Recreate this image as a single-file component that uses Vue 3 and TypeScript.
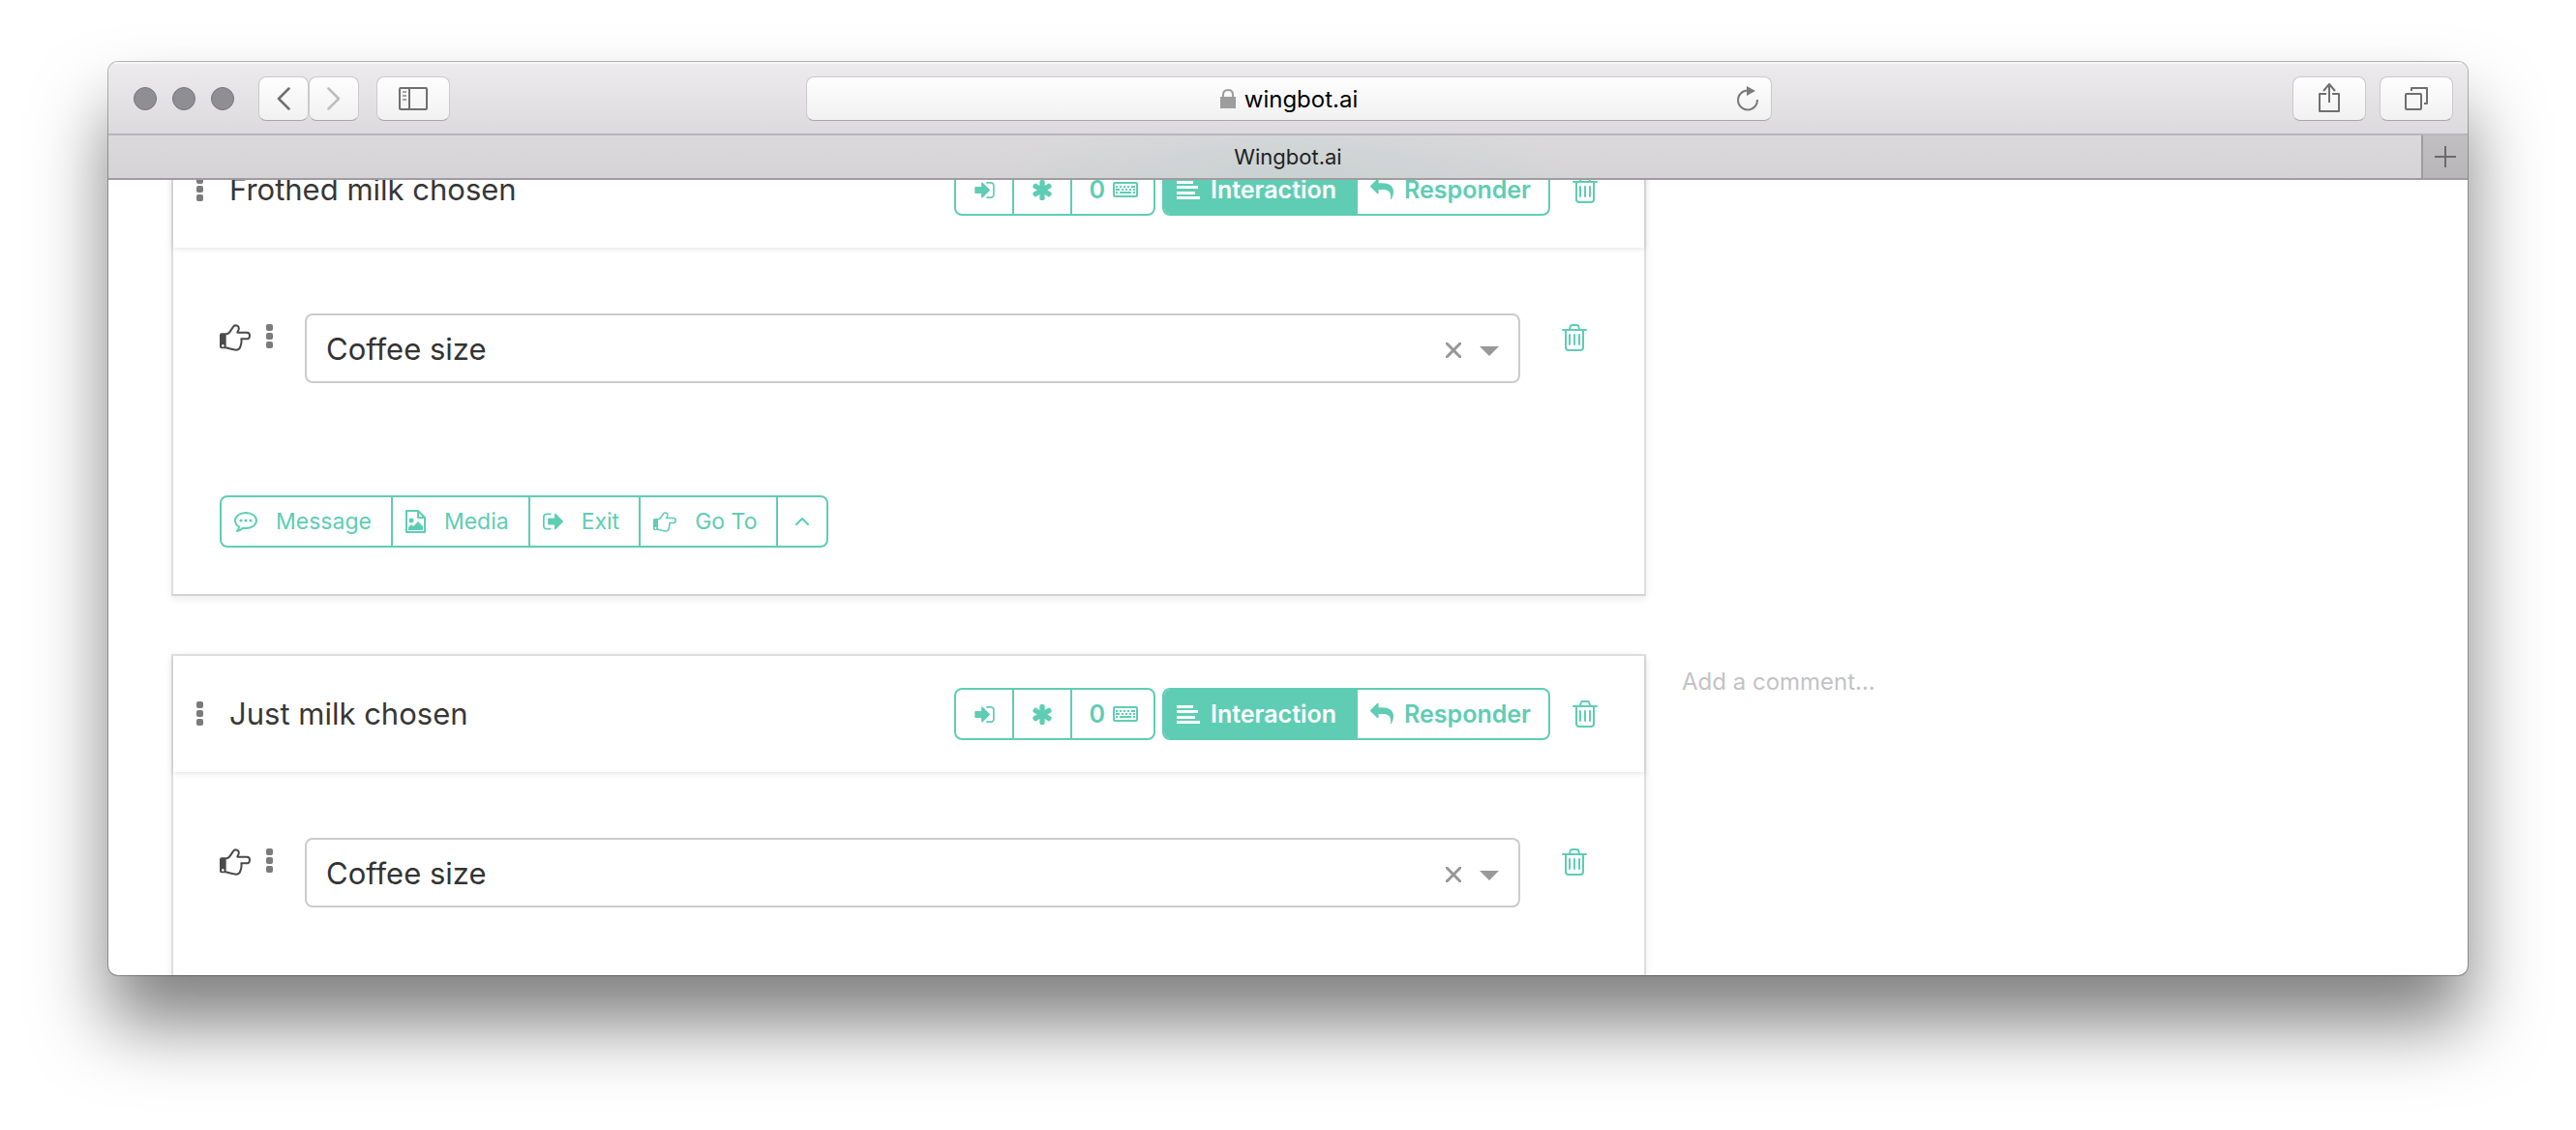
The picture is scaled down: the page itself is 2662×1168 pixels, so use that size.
<script setup lang="ts">
import { ref } from 'vue'

interface Block {
  id: number
  title: string
  target: string
  phrases: number
  comment: string
}

const address = ref('wingbot.ai')
const blocks = ref<Block[]>([
  { id: 1, title: 'Frothed milk chosen', target: 'Coffee size', phrases: 0, comment: '' },
  { id: 2, title: 'Just milk chosen', target: 'Coffee size', phrases: 0, comment: '' },
])
const inserts = [
  { label: 'Message', icon: 'comment' },
  { label: 'Media', icon: 'media' },
  { label: 'Exit', icon: 'exit' },
  { label: 'Go To', icon: 'hand' },
]
</script>

<template>
  <svg class="sprite" aria-hidden="true">
    <symbol id="hand" viewBox="0 0 96 84">
      <path fill="currentColor" fill-rule="evenodd" d="M6 28H20V76H6Q0 76 0 70V34Q0 28 6 28ZM10 63a4 4 0 1 0 .1 0Z" />
      <path fill="none" stroke="currentColor" stroke-width="6" stroke-linejoin="round" d="M19 31Q27 31 33 22L41 10Q46 2 54 5Q61 8 59 16L55 26H84Q93 26 93 35Q93 46 83 46H67Q69 55 65 67Q62 81 51 80Q36 78 19 73" />
    </symbol>
    <symbol id="trash" viewBox="0 0 26 28">
      <path fill="none" stroke="currentColor" stroke-width="2" stroke-linecap="round" stroke-linejoin="round" d="M1 6H25M8 5L9 2Q9 1 11 1H15Q17 1 17 2L18 5M4 6V24Q4 27 7 27H19Q22 27 22 24V6M8 11V21M13 11V21M18 11V21" />
    </symbol>
    <symbol id="dots" viewBox="0 0 8 26">
      <rect width="7" height="7" rx="2" fill="currentColor" />
      <rect y="9" width="7" height="7" rx="2" fill="currentColor" />
      <rect y="18" width="7" height="7" rx="2" fill="currentColor" />
    </symbol>
    <symbol id="enter" viewBox="128 256 1536 1280">
      <path fill="currentColor" d="M1312 896q0 26-19 45l-544 544q-19 19-45 19t-45-19-19-45v-288h-448q-26 0-45-19t-19-45v-384q0-26 19-45t45-19h448v-288q0-26 19-45t45-19 45 19l544 544q19 19 19 45zm352-352v704q0 119-84.5 203.5t-203.5 84.5h-320q-13 0-22.5-9.5t-9.5-22.5q0-4-1-20t-.5-26.5 3-23.5 10-19.5 20.5-6.5h320q66 0 113-47t47-113v-704q0-66-47-113t-113-47h-312l-11.5-1-11.5-3-8-5.5-7-9-2-13.5q0-4-1-20t-.5-26.5 3-23.5 10-19.5 20.5-6.5h320q119 0 203.5 84.5t84.5 203.5z" />
    </symbol>
    <symbol id="exit" viewBox="64 256 1568 1280">
      <path fill="currentColor" d="M704 1440q0 4 1 20t.5 26.5-3 23.5-10 19.5-20.5 6.5h-320q-119 0-203.5-84.5t-84.5-203.5v-704q0-119 84.5-203.5t203.5-84.5h320q13 0 22.5 9.5t9.5 22.5q0 4 1 20t.5 26.5-3 23.5-10 19.5-20.5 6.5h-320q-66 0-113 47t-47 113v704q0 66 47 113t113 47h312l11.5 1 11.5 3 8 5.5 7 9 2 13.5zm928-544q0 26-19 45l-544 544q-19 19-45 19t-45-19-19-45v-288h-448q-26 0-45-19t-19-45v-384q0-26 19-45t45-19h448v-288q0-26 19-45t45-19 45 19l544 544q19 19 19 45z" />
    </symbol>
    <symbol id="asterisk" viewBox="178 128 1436 1536">
      <path fill="currentColor" d="M1546 1050q46 26 59.5 77.5t-12.5 97.5l-64 110q-26 46-77.5 59.5t-97.5-12.5l-266-153v307q0 52-38 90t-90 38h-128q-52 0-90-38t-38-90v-307l-266 153q-46 26-97.5 12.5t-77.5-59.5l-64-110q-26-46-12.5-97.5t59.5-77.5l266-154-266-154q-46-26-59.5-77.5t12.5-97.5l64-110q26-46 77.5-59.5t97.5 12.5l266 153v-307q0-52 38-90t90-38h128q52 0 90 38t38 90v307l266-153q46-26 97.5-12.5t77.5 59.5l64 110q26 46 12.5 97.5t-59.5 77.5l-266 154z" />
    </symbol>
    <symbol id="keyboard" viewBox="0 0 26 16">
      <rect x="1" y="1" width="24" height="14" rx="1" fill="none" stroke="currentColor" stroke-width="2" />
      <path stroke="currentColor" stroke-width="2" d="M3 5H5M7 5H9M11 5H13M15 5H17M19 5H23M3 8H7M9 8H11M13 8H15M17 8H19M21 8H23M3 11H5M7 11H19M21 11H23" />
    </symbol>
    <symbol id="lines" viewBox="0 0 24 19">
      <path fill="currentColor" d="M0 0H17V3H0ZM0 5H22V8H0ZM0 11H19V14H0ZM0 16H24V19H0Z" />
    </symbol>
    <symbol id="reply" viewBox="0 128 1792 1536">
      <path fill="currentColor" d="M1792 1120q0 166-127 451-3 7-10.5 24t-13.5 30-13 22q-12 17-28 17-15 0-23.5-10t-8.5-25q0-9 2.5-26.5t2.5-23.5q5-68 5-123 0-101-17.5-181t-48.5-138.5-80-101-105.5-69.5-133-42.5-154-21.5-175.5-6h-224v256q0 26-19 45t-45 19-45-19l-512-512q-19-19-19-45t19-45l512-512q19-19 45-19t45 19 19 45v256h224q713 0 875 403 53 134 53 333z" />
    </symbol>
    <symbol id="comment" viewBox="0 0 24 21">
      <path fill="none" stroke="currentColor" stroke-width="2" stroke-linejoin="round" d="M5 15.500Q1 13 1 9C1 4.500 6 1 12 1S23 4.500 23 9S18 17 12 17Q10.500 17 9 16.700Q6 19.500 3 20Q5 18 5 15.500Z" />
      <circle cx="7" cy="9" r="1.600" fill="currentColor" />
      <circle cx="12" cy="9" r="1.600" fill="currentColor" />
      <circle cx="17" cy="9" r="1.600" fill="currentColor" />
    </symbol>
    <symbol id="media" viewBox="0 0 21 24">
      <path fill="none" stroke="currentColor" stroke-width="2" stroke-linejoin="round" d="M1 1H13L20 8V23H1ZM13 1V8H20" />
      <circle cx="6" cy="11" r="2.500" fill="currentColor" />
      <path fill="currentColor" d="M3 21V18L6 15L8 17L13 12L18 17V21Z" />
    </symbol>
  </svg>

  <div class="desktop">
    <main class="window">
      <header class="toolbar">
        <div class="tools">
          <span class="light"></span><span class="light"></span><span class="light"></span>
          <button class="tool narrow first" aria-label="Back">
            <svg width="14" height="24" viewBox="0 0 14 24"><path d="M12.500 1.500L2 12L12.500 22.500" fill="none" stroke="#6f6f70" stroke-width="2.500" stroke-linecap="round" stroke-linejoin="round" /></svg>
          </button>
          <button class="tool narrow" aria-label="Forward">
            <svg width="14" height="24" viewBox="0 0 14 24"><path d="M1.500 1.500L12 12L1.500 22.500" fill="none" stroke="#bebdbe" stroke-width="2.500" stroke-linecap="round" stroke-linejoin="round" /></svg>
          </button>
          <button class="tool side" aria-label="Show sidebar">
            <svg width="30" height="24" viewBox="0 0 30 24" fill="none" stroke="#6f6f70" stroke-width="2"><rect x="1" y="1" width="28" height="22" rx="1" /><path d="M11 1V23" /><path d="M4 5H8M4 9H8M4 13H8" stroke="#a2a2a3" /></svg>
          </button>
        </div>
        <label class="address">
          <svg width="16" height="20" viewBox="0 0 16 20"><path d="M3 9V6Q3 1 8 1T13 6V9" fill="none" stroke="#9d9d9d" stroke-width="2" /><rect y="8" width="16" height="12" fill="#9d9d9d" /></svg>
          <input v-model="address" type="text" aria-label="Address" />
          <button class="reload" aria-label="Reload">
            <svg width="24" height="26" viewBox="0 0 24 26"><path d="M22 14A10 10 0 1 1 12 4.500" fill="none" stroke="#7b7b7c" stroke-width="2" /><path d="M11 0L20 5L11 10Z" fill="#7b7b7c" /></svg>
          </button>
        </label>
        <div class="tools end">
          <button class="tool" aria-label="Share">
            <svg class="share" width="22" height="30" viewBox="0 0 22 30" fill="none" stroke="#6f6f70" stroke-width="2" stroke-linejoin="round"><path d="M8 11H1V29H21V11H14M11 20V2M5 8L11 1L17 8" /></svg>
          </button>
          <button class="tool" aria-label="Show all tabs">
            <svg width="24" height="24" viewBox="0 0 24 24" fill="none" stroke="#6f6f70" stroke-width="2" stroke-linejoin="round"><rect x="1" y="7" width="16" height="16" rx="1" /><path d="M7 4V1H23V17H20" /></svg>
          </button>
        </div>
      </header>

      <nav class="tabs">
        <a class="tab" href="#">Wingbot.ai</a>
        <button class="plus" aria-label="New tab">
          <svg width="22" height="22" viewBox="0 0 22 22"><path d="M0 11H22M11 0V22" stroke="#6a6a6b" stroke-width="2" /></svg>
        </button>
      </nav>

      <div class="page">
        <div class="list">
          <div v-for="block in blocks" :key="block.id" class="entry">
            <section class="card">
              <header class="head">
                <svg class="dots"><use href="#dots" /></svg>
                <h2>{{ block.title }}</h2>
                <div class="group bold">
                  <button class="pill w-icon" aria-label="Entry point"><svg width="21" height="17"><use href="#enter" /></svg></button>
                  <button class="pill w-icon" aria-label="Fallback"><svg width="20" height="21"><use href="#asterisk" /></svg></button>
                  <button class="pill w-count">{{ block.phrases }}<svg width="26" height="16"><use href="#keyboard" /></svg></button>
                </div>
                <div class="group bold">
                  <button class="pill w-mode active"><svg width="24" height="19"><use href="#lines" /></svg>Interaction</button>
                  <button class="pill w-mode"><svg width="24" height="22"><use href="#reply" /></svg>Responder</button>
                </div>
                <button class="bin" aria-label="Delete interaction"><svg width="26" height="28"><use href="#trash" /></svg></button>
              </header>

              <div class="body">
                <div class="row">
                  <svg class="hand"><use href="#hand" /></svg>
                  <svg class="dots"><use href="#dots" /></svg>
                  <div class="picker">
                    <select v-model="block.target" aria-label="Go to interaction">
                      <option>Coffee size</option>
                    </select>
                    <button class="clear" aria-label="Clear">
                      <svg width="16" height="16" viewBox="0 0 16 16"><path d="M1 1L15 15M15 1L1 15" stroke="#979797" stroke-width="3" stroke-linecap="round" /></svg>
                    </button>
                    <svg class="arrow" width="20" height="10" viewBox="0 0 20 10"><path d="M0 0H20L10 10Z" fill="#999" /></svg>
                  </div>
                  <button class="bin" aria-label="Delete action"><svg width="26" height="28"><use href="#trash" /></svg></button>
                </div>

                <div class="group">
                  <button v-for="item in inserts" :key="item.label" class="pill insert">
                    <svg :class="item.icon"><use :href="'#' + item.icon" /></svg>{{ item.label }}
                  </button>
                  <button class="pill more" aria-label="More">
                    <svg width="14" height="8" viewBox="0 0 14 8"><path d="M1 7L7 1L13 7" fill="none" stroke="currentColor" stroke-width="2" stroke-linecap="round" stroke-linejoin="round" /></svg>
                  </button>
                </div>
              </div>
            </section>
            <input v-model="block.comment" class="note" type="text" placeholder="Add a comment…" aria-label="Comment" />
          </div>
        </div>
      </div>
    </main>
  </div>
</template>

<style>
body {
  background: #fff;
}
</style>

<style scoped>
* {
  box-sizing: border-box;
}

button,
input,
select {
  margin: 0;
  padding: 0;
  border: 0;
  background: none;
  color: inherit;
  font: inherit;
}

svg {
  display: block;
  flex: none;
}

.sprite {
  position: absolute;
  width: 0;
  height: 0;
}

.desktop {
  height: 100vh;
  padding: 64px 112px 160px;
  overflow: hidden;
  color: #373737;
  font-family: Inter, "Liberation Sans", sans-serif;
}

.window {
  display: flex;
  flex-direction: column;
  height: 100%;
  overflow: hidden;
  border-radius: 10px;
  background: #fff;
  box-shadow: 0 0 0 1px rgba(0, 0, 0, 0.28), 0 50px 76px rgba(0, 0, 0, 0.5);
}

.toolbar {
  display: grid;
  grid-template-columns: 1fr minmax(0, 998px) 1fr;
  align-items: center;
  flex: none;
  height: 76px;
  padding: 2px 15px 0 17px;
  border-bottom: 2px solid #b8b6ba;
  background: linear-gradient(#edebee, #dcdadd);
  box-shadow: inset 0 2px 0 #f5f4f6;
}

.tools {
  display: flex;
  align-items: center;
}

.tools.end {
  justify-content: flex-end;
  gap: 14px;
}

.light {
  width: 24px;
  height: 24px;
  margin-left: 16px;
  border: 1px solid #77767b;
  border-radius: 50%;
  background: #8f8e93;
}

.light:first-child {
  margin-left: 9px;
}

.tool,
.address {
  border: 1px solid #cbc9cc;
  border-bottom-color: #a9a7aa;
  border-radius: 8px;
  background: linear-gradient(#fefefe, #f1f1f1);
}

.tool {
  display: flex;
  align-items: center;
  justify-content: center;
  width: 76px;
  height: 46px;
}

.tool.narrow {
  width: 52px;
}

.tool.first {
  margin-left: 25px;
}

.tool.side {
  margin-left: 18px;
}

.share {
  margin-bottom: 2px;
}

.address {
  position: relative;
  display: flex;
  align-items: center;
  justify-content: center;
  gap: 9px;
  height: 46px;
  color: #000;
  font-size: 24px;
}

.address input {
  field-sizing: content;
}

.reload {
  position: absolute;
  right: 12px;
}

.tabs {
  display: flex;
  flex: none;
  height: 46px;
  border-bottom: 2px solid #9e9c9f;
  background:
    radial-gradient(ellipse 300px 80px at 50% 100%, rgba(190, 208, 205, 0.5), rgba(190, 208, 205, 0)),
    linear-gradient(#dbd9dc, #d5d3d6);
}

.tab {
  flex: 1;
  padding-left: 48px;
  color: #222;
  font-size: 22px;
  line-height: 44px;
  text-align: center;
  text-decoration: none;
}

.plus {
  display: flex;
  align-items: center;
  justify-content: center;
  width: 48px;
  border-left: 2px solid #9e9c9f;
  background: linear-gradient(#c1bfc2, #b8b6b9);
}

.page {
  flex: 1;
  min-height: 0;
  overflow: hidden;
  padding: 0 37px 0 65px;
}

.list {
  display: grid;
  gap: 60px;
  margin-top: -52px;
}

.entry {
  display: grid;
  grid-template-columns: minmax(0, 1524fr) minmax(0, 775fr);
  align-items: start;
  gap: 37px;
}

.card {
  border: 2px solid #dedede;
  border-top-color: #e5e5e5;
  border-bottom-color: #d3d3d3;
  box-shadow: 0 3px 8px rgba(0, 0, 0, 0.08);
}

.head {
  display: flex;
  align-items: center;
  height: 120px;
  padding: 0 48px 0 24px;
  box-shadow: 0 1px 6px rgba(0, 0, 0, 0.12);
}

.dots {
  width: 8px;
  height: 26px;
  color: #7b7b7b;
}

h2 {
  flex: 1;
  margin: 0 0 0 26px;
  font-size: 31px;
  font-weight: 400;
  line-height: 40px;
}

.group {
  display: flex;
  width: max-content;
  overflow: hidden;
  border: 2px solid #5fcdb4;
  border-radius: 8px;
  color: #5fcdb4;
}

.group.bold {
  margin-right: 7px;
  font-size: 25px;
  font-weight: 600;
}

.pill {
  display: flex;
  align-items: center;
  height: 50px;
}

.pill + .pill {
  border-left: 2px solid #5fcdb4;
}

.w-icon {
  justify-content: center;
  width: 58px;
}

.pill + .w-icon {
  width: 60px;
}

.w-count {
  gap: 8px;
  padding: 0 16px 0 17px;
}

.w-mode {
  gap: 11px;
  padding: 0 18px 0 13px;
}

.active {
  padding-right: 20px;
  background: #5fcdb4;
  color: #fff;
}

.bin {
  margin-left: 16px;
  color: #5fcdb4;
}

.body {
  padding: 68px 48px 48px;
}

.row {
  display: flex;
  align-items: flex-start;
  margin-bottom: 116px;
}

.row > svg,
.row > .bin {
  margin-top: 11px;
}

.row > .bin {
  margin-right: 11px;
  margin-left: 43px;
}

.row .dots {
  margin-right: 32px;
  margin-left: 16px;
}

.insert .hand {
  width: 24px;
  height: 21px;
}

.row .hand {
  width: 32px;
  height: 28px;
  color: #4a4a4a;
}

.picker {
  display: flex;
  position: relative;
  flex: 1;
}

.picker select {
  width: 100%;
  height: 72px;
  padding: 0 92px 0 20px;
  appearance: none;
  border: 2px solid #ccc;
  border-radius: 8px;
  color: #333;
  font-size: 31px;
}

.clear {
  position: absolute;
  top: 30px;
  right: 61px;
}

.arrow {
  position: absolute;
  top: 34px;
  right: 22px;
  pointer-events: none;
}

.insert {
  gap: 19px;
  padding: 0 20px 0 13px;
  font-size: 23px;
}

.comment {
  width: 24px;
  height: 21px;
}

.media {
  width: 21px;
  height: 24px;
}

.exit {
  width: 21px;
  height: 18px;
}

.more {
  justify-content: center;
  width: 52px;
}

.note {
  width: 100%;
  margin-top: 9px;
  color: #555;
  font-size: 24px;
  line-height: 40px;
}

.note::placeholder {
  color: #c3c3c3;
  opacity: 1;
}
</style>
